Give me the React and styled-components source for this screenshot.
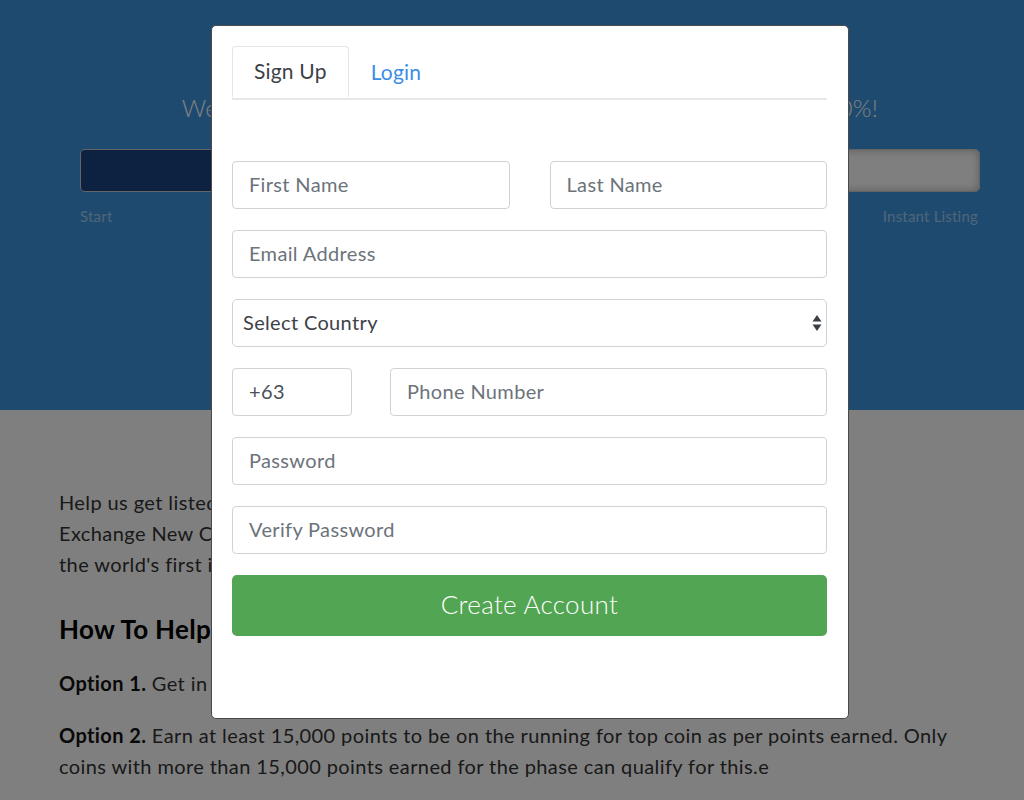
import React from 'react';
import styled, { createGlobalStyle } from 'styled-components';

const GlobalStyle = createGlobalStyle`
  html, body {
    margin: 0;
    padding: 0;
    background: #ffffff;
    font-family: Lato, "Noto Sans", sans-serif;
  }
  * { box-sizing: border-box; }
`;

const App = () => {
  const [tab, setTab] = React.useState('signup');

  return (
    <>
      <GlobalStyle />
      <Page>
        <Hero>
          <Headline>We are almost there! Help TotalDash get listed by reaching 100%!</Headline>
          <Progress>
            <ProgressFill style={{ width: '28%' }} />
          </Progress>
          <ProgressLabels>
            <span>Start</span>
            <span>Instant Listing</span>
          </ProgressLabels>
        </Hero>
        <Content>
          <Paragraph>
            Help us get listed on the exchange by voting for your coin in the TotalDash<br />
            Exchange New Coin Listing and be part of the growing TotalDash Exchange -<br />
            the world's first instant listing exchange.
          </Paragraph>
          <Heading>How To Help</Heading>
          <Paragraph>
            <b>Option 1.</b> Get in the top 3 coins with the most votes.
          </Paragraph>
          <Paragraph>
            <b>Option 2.</b> Earn at least 15,000 points to be on the running for top coin as per points earned. Only<br />
            coins with more than 15,000 points earned for the phase can qualify for this.e
          </Paragraph>
        </Content>
      </Page>

      <Overlay />
      <Modal>
        <Tabs>
          <Tab active={tab === 'signup'} onClick={() => setTab('signup')}>Sign Up</Tab>
          <Tab active={tab === 'login'} onClick={() => setTab('login')}>Login</Tab>
        </Tabs>
        <Form onSubmit={(e) => e.preventDefault()}>
          <Row cols="1fr 1fr" gap="40px">
            <Input placeholder="First Name" />
            <Input placeholder="Last Name" />
          </Row>
          <Input placeholder="Email Address" />
          <SelectWrap>
            <Select defaultValue="">
              <option value="">Select Country</option>
              <option value="ph">Philippines</option>
            </Select>
            <Arrows>
              <svg width="10" height="18" viewBox="0 0 10 18">
                <path d="M5 1 L9.5 7.5 L0.5 7.5 Z" fill="#3a3f45" />
                <path d="M5 17 L9.5 10.5 L0.5 10.5 Z" fill="#3a3f45" />
              </svg>
            </Arrows>
          </SelectWrap>
          <Row cols="120px 1fr" gap="38px">
            <Input defaultValue="+63" />
            <Input placeholder="Phone Number" />
          </Row>
          <Input type="password" placeholder="Password" />
          <Input type="password" placeholder="Verify Password" />
          <SubmitButton type="submit">Create Account</SubmitButton>
        </Form>
      </Modal>
    </>
  );
};

export default App;

const Page = styled.div`
  min-height: 800px;
`;

const Hero = styled.section`
  height: 410px;
  background: #3c94e0;
  padding: 93px 44px 0 80px;
  color: #ffffff;
`;

const Headline = styled.h1`
  margin: 0 0 26px;
  text-align: center;
  font-weight: 300;
  font-size: 24px;
  line-height: 30px;
  letter-spacing: 0.3px;
  color: #ffffff;
`;

const Progress = styled.div`
  height: 43px;
  border: 1px solid #c8c8c8;
  border-radius: 5px;
  background: #ffffff;
  box-shadow: inset 0 0 8px rgba(0, 0, 0, 0.3);
  overflow: hidden;
`;

const ProgressFill = styled.div`
  height: 100%;
  background: #184480;
`;

const ProgressLabels = styled.div`
  display: flex;
  justify-content: space-between;
  margin-top: 15px;
  padding-right: 2px;
  font-size: 15px;
  letter-spacing: 0.2px;
  color: #a0cdf2;
`;

const Content = styled.section`
  padding: 77px 59px 0;
  color: #333333;
`;

const Paragraph = styled.p`
  margin: 0 0 21px;
  font-size: 20px;
  line-height: 31px;
  letter-spacing: 0.4px;
  white-space: nowrap;
  b { font-weight: 700; color: #111; }
`;

const Heading = styled.h2`
  margin: 33px 0 23px;
  font-size: 26px;
  font-weight: 700;
  letter-spacing: 0.3px;
  color: #000000;
`;

const Overlay = styled.div`
  position: fixed;
  inset: 0;
  background: rgba(0, 0, 0, 0.5);
`;

const Modal = styled.div`
  position: fixed;
  top: 25px;
  left: 211px;
  width: 638px;
  height: 694px;
  background: #ffffff;
  border: 1px solid #4a4a4a;
  border-radius: 5px;
  padding: 20px 21px 0 20px;
`;

const Tabs = styled.div`
  display: flex;
  border-bottom: 2px solid #e8e8e8;
`;

const Tab = styled.button`
  height: 52px;
  padding: 0 21px 3px;
  margin-bottom: ${(p) => (p.active ? '-2px' : '0')};
  font-family: Lato, "Noto Sans", sans-serif;
  font-size: 21px;
  letter-spacing: 0.2px;
  background: #ffffff;
  cursor: pointer;
  color: ${(p) => (p.active ? '#3d4248' : '#3d8de6')};
  border: 1px solid ${(p) => (p.active ? '#e4e4e4' : 'transparent')};
  border-bottom: ${(p) => (p.active ? '2px solid #ffffff' : 'none')};
  border-radius: 4px 4px 0 0;
`;

const Form = styled.form`
  display: flex;
  flex-direction: column;
  gap: 21px;
  margin-top: 61px;
`;

const Row = styled.div`
  display: grid;
  grid-template-columns: ${(p) => p.cols};
  column-gap: ${(p) => p.gap};
`;

const Input = styled.input`
  width: 100%;
  height: 48px;
  padding: 0 16px 3px;
  border: 1px solid #ced3d8;
  border-radius: 4px;
  font-family: Lato, "Noto Sans", sans-serif;
  font-size: 20px;
  letter-spacing: 0.35px;
  color: #4a5058;
  &::placeholder { color: #6c737b; }
`;

const SelectWrap = styled.div`
  position: relative;
`;

const Select = styled.select`
  width: 100%;
  height: 48px;
  padding: 0 10px 3px;
  border: 1px solid #ced3d8;
  border-radius: 5px;
  background: #ffffff;
  appearance: none;
  font-family: Lato, "Noto Sans", sans-serif;
  font-size: 20px;
  letter-spacing: 0.35px;
  color: #3d4248;
`;

const Arrows = styled.span`
  position: absolute;
  right: 5px;
  top: 15px;
  pointer-events: none;
  line-height: 0;
`;

const SubmitButton = styled.button`
  height: 61px;
  padding-bottom: 4px;
  border: none;
  border-radius: 5px;
  background: #52a552;
  color: #ffffff;
  font-family: Lato, "Noto Sans", sans-serif;
  font-size: 26px;
  font-weight: 300;
  letter-spacing: 0.3px;
  cursor: pointer;
`;
